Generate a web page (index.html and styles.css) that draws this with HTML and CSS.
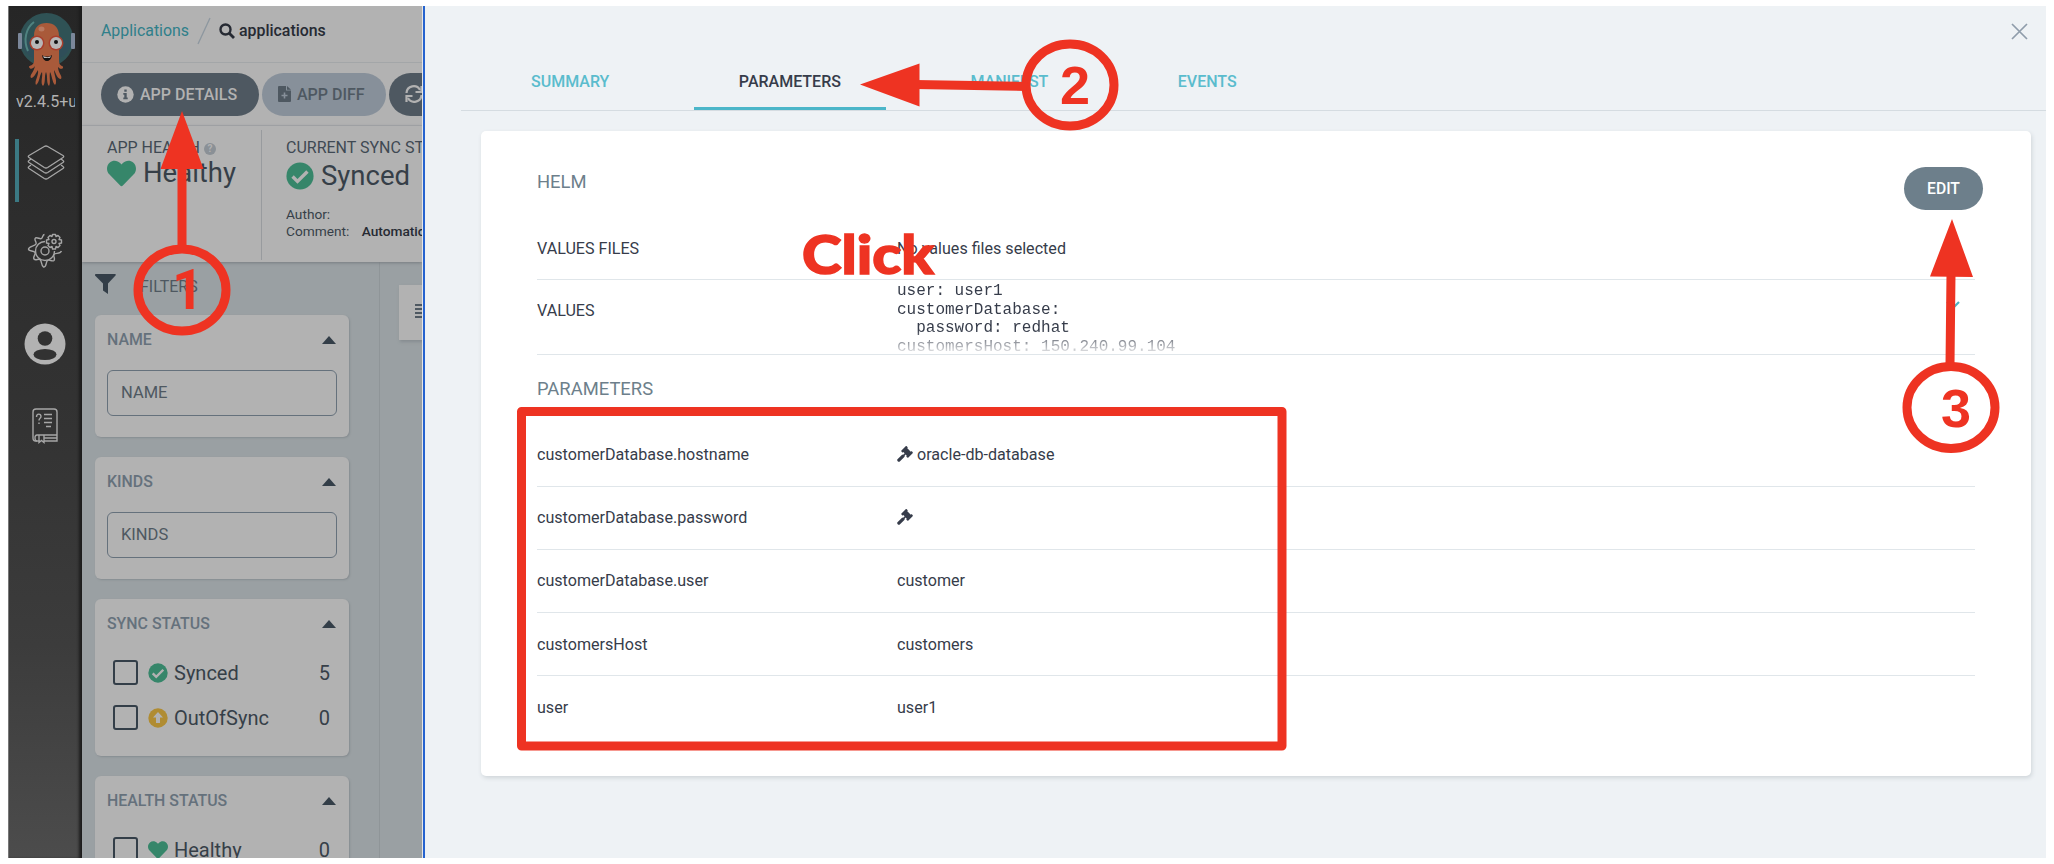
FILE: index.html
```html
<!DOCTYPE html>
<html lang="en">
<head>
<meta charset="utf-8">
<title>Applications</title>
<link rel="stylesheet" href="styles.css">
</head>
<body>
<svg class="defs" width="0" height="0">
  <symbol id="heart" viewBox="0 0 512 512"><path fill="currentColor" d="M462 62c-55-47-136-38-186 14l-20 20-20-20C186 24 105 15 50 62c-63 54-66 150-10 208l193 200c13 13 33 13 46 0l193-200c56-58 53-154-10-208z"/></symbol>
  <symbol id="check" viewBox="0 0 512 512"><circle cx="256" cy="256" r="248" fill="currentColor"/><path d="M120 265l90 90 182-182" fill="none" stroke="#b2b2b2" stroke-width="62"/></symbol>
  <symbol id="gavel" viewBox="0 0 512 512"><path fill="currentColor" d="M505 200l-23-23c-9-9-25-9-34 0l-6 6L329 70l6-6c9-9 9-25 0-34L312 7c-9-9-25-9-34 0L142 143c-9 9-9 25 0 34l23 23c9 9 25 9 34 0l6-6 40 40-50 50 34 34 50-50 34 40-6 6c-9 9-9 25 0 34l23 23c9 9 25 9 34 0l136-136c9-9 9-25 0-34z"/><path d="M60 452L190 325" stroke="currentColor" stroke-width="105" stroke-linecap="round"/></symbol>
</svg>
<div class="shot">
  <nav class="side">
    <svg class="logo" width="58" height="76" viewBox="0 0 58 76">
      <circle cx="28.500" cy="28" r="27" fill="#2f5255"/>
      <path d="M2 28a27 27 0 0 0 53 0" fill="#304a5c" opacity=".55"/>
      <path d="M16 10C8 16 5 28 10 39" fill="none" stroke="#4f8380" stroke-width="2"/>
      <rect x="0" y="21" width="4" height="16" rx="1" fill="#7b879a"/><rect x="53" y="21" width="4" height="16" rx="1" fill="#7b879a"/>
      <path d="M16 24c0-9 5-13 12.500-13S41 15 41 24v25c0 6 5 4 4 7-2 2-4 0-5-1 0 6 5 9 3 12-4 0-5-6-7-9 0 5 4 12 1 15-3-3-3-10-5-13-1 5 1 11-1 14-3-3-1-10-3-14-2 4 0 11-3 14-3-3 0-9-1-14-3 4-2 10-6 13-2-4 3-9 2-15-2 3-4 8-7 8-2-3 3-6 4-12-2 3-5 4-6 1 0-2 5-1 5-6z" fill="#a95a3a"/>
      <ellipse cx="23.500" cy="17" rx="3" ry="2.500" fill="#b97960"/>
      <circle cx="19" cy="31" r="7.500" fill="#a83e2c"/><circle cx="38" cy="31" r="7.500" fill="#a83e2c"/>
      <circle cx="19" cy="31" r="6" fill="#b7b7b7"/><circle cx="38" cy="31" r="6" fill="#b7b7b7"/>
      <circle cx="19" cy="30" r="2" fill="#111"/><circle cx="38" cy="30" r="2" fill="#111"/>
      <path d="M24 43c3 2 7 2 10 0-1 8-9 8-10 0z" fill="#111"/><path d="M25 44c3 1.500 6 1.500 8 0l-1 2h-6z" fill="#bbb"/>
    </svg>
    <div class="version">v2.4.5+u</div>
    <div class="navitem active"><svg width="40" height="40" viewBox="0 0 40 40" fill="none" stroke="#a6a6a6" stroke-width="1.300" stroke-linejoin="round"><path d="M18.300 2.500q1.700-1 3.400 0l15.300 9q1.500 1 0 2l-15.300 10q-1.700 1-3.400 0L3 13.500q-1.500-1 0-2z"/><path d="M5 15l-2 1.500q-1.500 1 0 2l15.300 10q1.700 1 3.400 0l15.300-10q1.500-1 0-2L35 15"/><path d="M5 21l-2 1.500q-1.500 1 0 2l15.300 10q1.700 1 3.400 0l15.300-10q1.500-1 0-2L35 21"/></svg></div>
    <div class="navitem gears"><svg width="36" height="36" viewBox="0 0 36 36" fill="none" stroke="#a6a6a6" stroke-width="1.400" stroke-linejoin="round"><circle cx="18" cy="19" r="4"/><path d="M18 9.500a9.500 9.500 0 1 0 9.500 9.500"/><path d="M17.500 2.500c-2 0-1.500 3-3 4s-4-1.500-6-.5c-2 1.500 1.500 4 .5 6S1.500 14.500 1.500 17s5.500 1.500 6.500 3.500-2.500 4.500-1 6.500 4-.5 6 .5 1 6.500 3.500 7.500c3.500 0 2-5 4-6.500s4.500 1.500 6.500 0c1.500-2-1-4 0-6s6 0 7.500-3.500"/><circle cx="27" cy="9.500" r="2"/><path d="M25.500 2.500h3l.5 2 2-1 2 2-1 2 2.500.5v3l-2.500.5 1 2-2 2-2-1-.5 2.500h-3l-.5-2.500-2 1-2-2 1-2-2.500-.5V8l2.500-.5-1-2 2-2 2 1z"/></svg></div>
    <div class="navitem user"><svg width="42" height="42" viewBox="0 0 42 42"><circle cx="21" cy="21" r="20.500" fill="#b2b2b2"/><circle cx="21" cy="15.500" r="7.300" fill="#323232"/><ellipse cx="21" cy="31.500" rx="11.500" ry="5.500" fill="#323232"/></svg></div>
    <div class="navitem docs"><svg width="26" height="36" viewBox="0 0 26 36" fill="none" stroke="#a6a6a6" stroke-width="1.400"><path d="M8 33H3.500Q1 33 1 30V4q0-3 3-3h18q3 0 3 3v29H12"/><path d="M25 27H5q-2 0-2 3t2 3M12 30h13M7 27v7.500l2.500-2 2.500 2V27M12 6.500h8M12 10.500h8M12 14.500h8M14 18.500h5"/><path d="M4.500 9c0-4 4.500-3.500 4.500-.5 0 2-2 1.500-2 4M7 14.500v1.500"/></svg></div>
  </nav>

  <main class="app">
    <header class="crumbs">
      <a>Applications</a>
      <svg width="14" height="28" viewBox="0 0 14 28"><path d="M13 1L1 27" stroke="#8d979f" stroke-width="1.300"/></svg>
      <svg class="mag" width="16" height="16" viewBox="0 0 16 16" fill="none" stroke="#262a33"><circle cx="6.500" cy="6.500" r="5" stroke-width="2.400"/><path d="M10 10l5 5" stroke-width="2.800"/></svg>
      <b>applications</b>
    </header>
    <div class="tools">
      <span class="btn details"><svg width="17" height="17" viewBox="0 0 17 17"><circle cx="8.500" cy="8.500" r="8.200" fill="#b2b2b2"/><path d="M7.300 3.500h2.400v2.300H7.300zM6.300 7h3.400v4.500h1v1.700H6.300v-1.700h1V8.700h-1z" fill="#4e5861"/></svg>APP DETAILS</span>
      <span class="btn diff"><svg width="13" height="16" viewBox="0 0 13 16"><path d="M1 0h7v4.500h5V15q0 1-1 1H1q-1 0-1-1V1q0-1 1-1zM9 0l4 3.700H9z" fill="#4e5861"/><path d="M6.500 6.500v6M3.500 9.500h6" stroke="#87909a" stroke-width="1.600"/></svg>APP DIFF</span>
      <span class="btn sync"><svg width="18" height="18" viewBox="0 0 18 18" fill="none" stroke="#b2b2b2" stroke-width="2.200"><path d="M1.500 8A7.200 7.200 0 0 1 15 5M16.500 10A7.200 7.200 0 0 1 3 13"/><path d="M16.500 1v6h-6M1.500 17v-6h6"/></svg></span>
    </div>
    <section class="status">
      <div class="health">
        <div class="lbl">APP HEALTH <i class="q">?</i></div>
        <div class="big"><svg width="29" height="29" class="green"><use href="#heart"/></svg>Healthy</div>
      </div>
      <div class="syncst">
        <div class="lbl">CURRENT SYNC STATUS</div>
        <div class="big"><svg width="28" height="28" class="green"><use href="#check"/></svg>Synced</div>
        <div class="meta">Author:</div>
        <div class="meta">Comment: <b>Automatic</b></div>
      </div>
    </section>
    <div class="lower">
      <aside class="filters">
        <div class="fhead"><svg width="21" height="21" viewBox="0 0 21 21"><path d="M.5 0h20q.5 1 0 1.500L13 9.500V20L8 16.500v-7L0 1.500Q0 0 .5 0z" fill="#333e48"/></svg><span>FILTERS</span></div>
        <div class="fcard"><div class="ft">NAME<i></i></div><div class="inp">NAME</div></div>
        <div class="fcard"><div class="ft">KINDS<i></i></div><div class="inp">KINDS</div></div>
        <div class="fcard tall"><div class="ft">SYNC STATUS<i></i></div>
          <div class="opt"><u></u><svg width="20" height="20" class="green"><use href="#check"/></svg><span>Synced</span><em>5</em></div>
          <div class="opt"><u></u><svg width="20" height="20" viewBox="0 0 20 20"><circle cx="10" cy="10" r="9.700" fill="#b08c32"/><path d="M10 4l5 5.500h-3V15H8V9.500H5z" fill="#b2b2b2"/></svg><span>OutOfSync</span><em>0</em></div>
        </div>
        <div class="fcard tall"><div class="ft">HEALTH STATUS<i></i></div>
          <div class="opt"><u></u><svg width="20" height="20" class="green"><use href="#heart"/></svg><span>Healthy</span><em>0</em></div>
        </div>
      </aside>
      <div class="tree"><div class="node"><s></s><s></s><s></s><s></s></div></div>
    </div>
  </main>

  <section class="panel">
    <svg class="close" width="17" height="17" viewBox="0 0 17 17"><path d="M1 1l15 15M16 1L1 16" stroke="#8f9dab" stroke-width="1.700"/></svg>
    <div class="tabs"><span>SUMMARY</span><span class="on">PARAMETERS</span><span>MANIFEST</span><span>EVENTS</span></div>
    <div class="card">
      <div class="chead"><h2>HELM</h2><span class="edit">EDIT</span></div>
      <div class="row files"><div>VALUES FILES</div><div>No values files selected</div></div>
      <div class="row values"><div>VALUES</div><pre>user: user1
customerDatabase:
  password: redhat
customersHost: 150.240.99.104</pre><svg class="chev" width="14" height="9" viewBox="0 0 14 9"><path d="M1 1l6 6 6-6" fill="none" stroke="#4bb3c4" stroke-width="2.200"/></svg></div>
      <h2 class="ph">PARAMETERS</h2>
      <div class="row"><div>customerDatabase.hostname</div><div><svg width="16" height="16"><use href="#gavel"/></svg> oracle-db-database</div></div>
      <div class="row"><div>customerDatabase.password</div><div><svg width="16" height="16"><use href="#gavel"/></svg></div></div>
      <div class="row"><div>customerDatabase.user</div><div>customer</div></div>
      <div class="row"><div>customersHost</div><div>customers</div></div>
      <div class="row last"><div>user</div><div>user1</div></div>
    </div>
  </section>
</div>

<svg class="notes" width="2054" height="864" viewBox="0 0 2054 864">
  <g fill="none" stroke="#ee3322" stroke-width="9">
    <ellipse cx="182" cy="290" rx="44" ry="41"/>
    <ellipse cx="1070" cy="85" rx="44" ry="41"/>
    <ellipse cx="1951" cy="407.500" rx="44" ry="41"/>
    <path d="M182 246V165M1027 86.500L915 84.500M1950 364l1-90"/>
    <rect x="521.500" y="411.500" width="760.500" height="334.500" stroke-linejoin="round"/>
  </g>
  <g fill="#ee3322">
    <path d="M182 111l21.500 58h-43zM860 84.500l59.500-21v43zM1952 219l21 58-43-.5z"/>
    <text class="num one" x="172" y="309">1</text>
    <text class="num" x="1060" y="104">2</text>
    <text class="num" x="1941" y="427">3</text>
    <text class="click" x="802" y="274" textLength="132" lengthAdjust="spacingAndGlyphs">Click</text>
  </g>
</svg>
</body>
</html>
```
FILE: styles.css
```css
* { box-sizing: border-box; }
body { margin: 0; background: #fff; font-family: Roboto, "Liberation Sans", sans-serif; color: #363c4a; width: 2054px; height: 864px; overflow: hidden; position: relative; }
.defs { position: absolute; }
.shot { display: flex; width: 2038px; height: 852px; margin: 6px 8px; overflow: hidden; }

.side { width: 74px; flex: none; background: linear-gradient(#262626, #2d2d2d 25%, #333 50%, #3c3c3c 75%, #4c4c4c); border-left: 1px solid #777; box-shadow: inset -4px 0 3px -1px #1d1d1d; display: flex; flex-direction: column; color: #b2b2b2; }
.logo { margin: 6px 0 0 9px; flex: none; }
.version { width: 59px; margin: 2px 0 0 7px; height: 24px; line-height: 24px; font-size: 16px; overflow: hidden; white-space: nowrap; }
.navitem { display: flex; align-items: center; justify-content: center; height: 62px; flex: none; padding-right: 1px; }
.active { margin: 25px 0 0 6px; padding-right: 9px; padding-bottom: 14px; border-left: 4px solid #3b7983; height: 63px; }
.gears { height: 36px; margin-top: 30px; }
.user { height: 42px; margin-top: 55px; }
.docs { height: 36px; margin-top: 43px; }

.app { width: 340px; flex: none; background: #9aa0a3; overflow: hidden; display: flex; flex-direction: column; }
.crumbs { height: 57px; flex: none; padding: 0 0 7px 19px; background: #b2b2b2; border-bottom: 1px solid #a3a6a8; display: flex; align-items: center; font-size: 15.900px; color: #262a33; white-space: nowrap; }
.crumbs a { color: #2f7f8a; width: 96px; }
.crumbs b { font-weight: 500; margin-left: 4px; }
.mag { margin-left: 8px; }
.tools { height: 63px; flex: none; padding-left: 19px; background: #b2b2b2; border-bottom: 1px solid #a6a8aa; display: flex; gap: 3px; align-items: center; }
.btn { height: 43px; border-radius: 22px; background: #4e5861; color: #b2b2b2; flex: none; display: flex; align-items: center; font-weight: 500; font-size: 16px; white-space: nowrap; gap: 6px; padding-left: 16px; }
.details { width: 158px; }
.diff { width: 124px; background: #87909a; color: #4e5861; }
.sync { width: 120px; }
.status { height: 136px; flex: none; background: #b2b2b2; display: flex; padding-top: 4px; box-shadow: 0 1px 3px #777c80; position: relative; color: #363f48; }
.health { width: 180px; flex: none; height: 130px; padding: 6px 0 0 25px; border-right: 1px solid #989b9e; }
.syncst { padding: 6px 0 0 24px; white-space: nowrap; }
.lbl { font-size: 16px; line-height: 24px; height: 23px; color: #3f4953; white-space: nowrap; }
.q { display: inline-block; width: 12px; height: 12px; border-radius: 6px; background: #8a9096; color: #b2b2b2; font: bold 10px/12px Roboto, sans-serif; text-align: center; vertical-align: 1px; }
.big { font-size: 27.500px; line-height: 32px; display: flex; align-items: center; gap: 7px; height: 32px; margin-top: -2px; }
.syncst .big { margin-top: 1px; margin-bottom: 14px; }
.green { color: #36866a; }
.meta { font-size: 13.700px; line-height: 17px; }
.meta b { font-weight: 500; margin-left: 9px; color: #262a33; }
.lower { flex: 1; display: flex; min-height: 0; }
.filters { width: 298px; flex: none; border-right: 1px solid #8f9598; padding: 12px 0 0 13px; }
.fhead { display: flex; height: 41px; font-size: 16px; color: #4e5861; gap: 24px; line-height: 25px; }
.fcard { width: 254px; height: 122px; margin-bottom: 20px; border-radius: 6px; background: #b2b2b2; box-shadow: 1px 1px 2px #868c90; padding: 12px 12px 0; overflow: hidden; }
.fcard.tall { height: 157px; }
.ft { display: flex; justify-content: space-between; align-items: center; font-size: 15.900px; font-weight: 500; line-height: 23px; height: 24px; color: #65717c; }
.ft i { border: 7px solid transparent; border-top: 0; border-bottom: 8px solid #333e48; margin: 2px 1px 0 0; }
.inp { width: 230px; height: 46px; margin-top: 19px; border: 1.500px solid #65717c; border-radius: 6px; padding-left: 13px; font-size: 16.500px; line-height: 43px; color: #4e5861; }
.opt { display: flex; align-items: center; height: 45px; padding: 0 7px 0 6px; font-size: 20px; color: #363f48; }
.ft + .opt { margin-top: 15px; }
.opt u { width: 25px; height: 25px; border: 2px solid #333e48; border-radius: 3px; margin-right: 10px; }
.opt span { margin-left: 6px; flex: 1; }
.opt em { font-style: normal; }
.tree { padding: 23px 0 0 19px; }
.node { width: 60px; height: 55px; background: #b2b2b2; box-shadow: 1px 2px 3px #868c90; padding: 19px 0 0 16px; display: flex; flex-direction: column; gap: 2px; }
.node s { height: 2px; background: #4e5861; flex: none; }

.panel { flex: 1; background: #eef2f5; border-left: 2px solid #2563cf; box-shadow: -1px 0 #e6e6e6; margin-left: 1px; position: relative; display: flex; flex-direction: column; }
.close { position: absolute; right: 18px; top: 17px; }
.tabs { margin-left: 36px; height: 104.500px; border-bottom: 1.500px solid #d5dce1; padding: 48px 0 0 25px; display: flex; gap: 39.500px; font-size: 16px; font-weight: 500; color: #5abccd; flex: none; }
.tabs span { padding: 0 45px; line-height: 56px; height: 56px; }
.tabs .on { color: #363c4a; border-bottom: 3px solid #4bb6c9; }
.card { margin: 20.500px 15px 0 56px; height: 645px; background: #fff; border-radius: 5px; box-shadow: 1px 2px 4px #cfd5d9; padding: 36px 56px 0; }
.chead { display: flex; justify-content: space-between; height: 49px; }
h2 { margin: 0; font-weight: 400; font-size: 18.400px; line-height: 30px; color: #6d7f8b; }
.edit { width: 79px; height: 43px; margin-right: -8px; background: #6d7f8b; border-radius: 22px; color: #fff; font-size: 15.700px; font-weight: 500; line-height: 43px; text-align: center; }
.row { display: grid; grid-template-columns: 360px 1fr; align-items: center; height: 63.200px; border-bottom: 1.500px solid #e0e6ea; font-size: 16.100px; }
.row svg { color: #363c4a; vertical-align: -2px; }
.row.files { height: 64px; padding-top: 1px; }
.row.values { height: 75px; position: relative; overflow: hidden; padding-bottom: 0; align-items: start; }
.values > div { line-height: 62px; }
.values pre { margin: 2px 0 0; height: 73px; font: 16px/18.500px "Liberation Mono", monospace; -webkit-mask-image: linear-gradient(#000 65%, transparent 102%); mask-image: linear-gradient(#000 65%, transparent 102%); }
.chev { position: absolute; right: 15px; top: 21px; }
.ph { padding-top: 19px; height: 68.500px; }
.row.last { border: 0; }

.notes { position: absolute; left: 0; top: 0; }
.num { font: bold 54px "Liberation Sans", Arial, sans-serif; }
.one { font: bold 55px Roboto, sans-serif; }
.click { font: 900 54px Lato, sans-serif; stroke: #ee3322; stroke-width: 1.500px; }
```
